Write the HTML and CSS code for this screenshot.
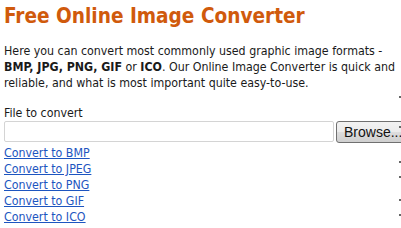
FILE: index.html
```html
<!DOCTYPE html>
<html lang="en">
<head>
    <meta charset="UTF-8">
    <title>Free Online Image Converter</title>
    <link rel="stylesheet" href="styles.css">
</head>
<body>
    <div class="page">
        <div class="main">
            <h1>Free Online Image Converter</h1>
            <p class="intro">Here you can convert most commonly used graphic image formats - <b>BMP, JPG, PNG, GIF</b> or <b>ICO</b>. Our Online Image Converter is quick and reliable, and what is most important quite easy-to-use.</p>
            <form class="upload">
                <label for="file">File to convert</label>
                <div class="file-row">
                    <input type="text" id="file" class="file-input">
                    <button type="button" class="browse">Browse...</button>
                </div>
            </form>
            <ul class="links">
                <li><a href="#">Convert to BMP</a></li>
                <li><a href="#">Convert to JPEG</a></li>
                <li><a href="#">Convert to PNG</a></li>
                <li><a href="#">Convert to GIF</a></li>
                <li><a href="#">Convert to ICO</a></li>
            </ul>
        </div>
        <!-- sidebar, cut off by the window -->
        <div class="side">
            <span class="dot d1"></span>
            <span class="dot d2"></span>
            <span class="dot d3"></span>
            <span class="dot d4"></span>
            <span class="dot d5"></span>
            <span class="dot d6"></span>
        </div>
    </div>
</body>
</html>
```

FILE: styles.css
```css
body {
    margin: 0;
    padding: 0;
    background: #fff;
    font-family: "DejaVu Sans Condensed", "DejaVu Sans", sans-serif;
    font-size: 12.3px;
    color: #1a1a1a;
    overflow: hidden;
}
.page {
    display: flex;
    width: 600px;
}
.main {
    width: 395px;
    padding-left: 4px;
    flex-shrink: 0;
}
h1 {
    margin: 3px 0 0;
    font-size: 20.6px;
    line-height: 26px;
    color: #d05a0c;
    font-weight: bold;
}
.intro {
    margin: 14px 0 0;
    line-height: 16px;
}
.upload {
    margin-top: 14px;
}
.upload label {
    display: block;
    line-height: 16px;
}
.file-row {
    display: flex;
    width: 420px;
}
.file-input {
    width: 330px;
    height: 21px;
    flex-shrink: 0;
    box-sizing: border-box;
    border: 1px solid #d4d4d4;
    border-radius: 2px;
    margin: 0 2px 0 0;
    padding: 0;
}
.browse {
    height: 22px;
    width: 80px;
    flex-shrink: 0;
    border: 1px solid #707070;
    border-radius: 3px;
    background: linear-gradient(#f2f2f2, #ebebeb 50%, #dddddd 51%, #cfcfcf);
    font-family: "Liberation Sans", Arial, sans-serif;
    font-size: 14px;
    color: #111;
    padding: 0 0 0 7px;
    text-align: left;
}
.links {
    list-style: none;
    margin: 2px 0 0;
    padding: 0;
}
.links li {
    line-height: 16px;
}
.links a {
    color: #1d55c0;
}
.side {
    position: relative;
    width: 20px;
}
.dot {
    position: absolute;
    left: 0;
    width: 2px;
    height: 2px;
    background: #666;
}
.d1 { top: 96px; }
.d2 { top: 126px; }
.d3 { top: 161px; }
.d4 { top: 176px; }
.d5 { top: 199px; }
.d6 { top: 214px; }
```
